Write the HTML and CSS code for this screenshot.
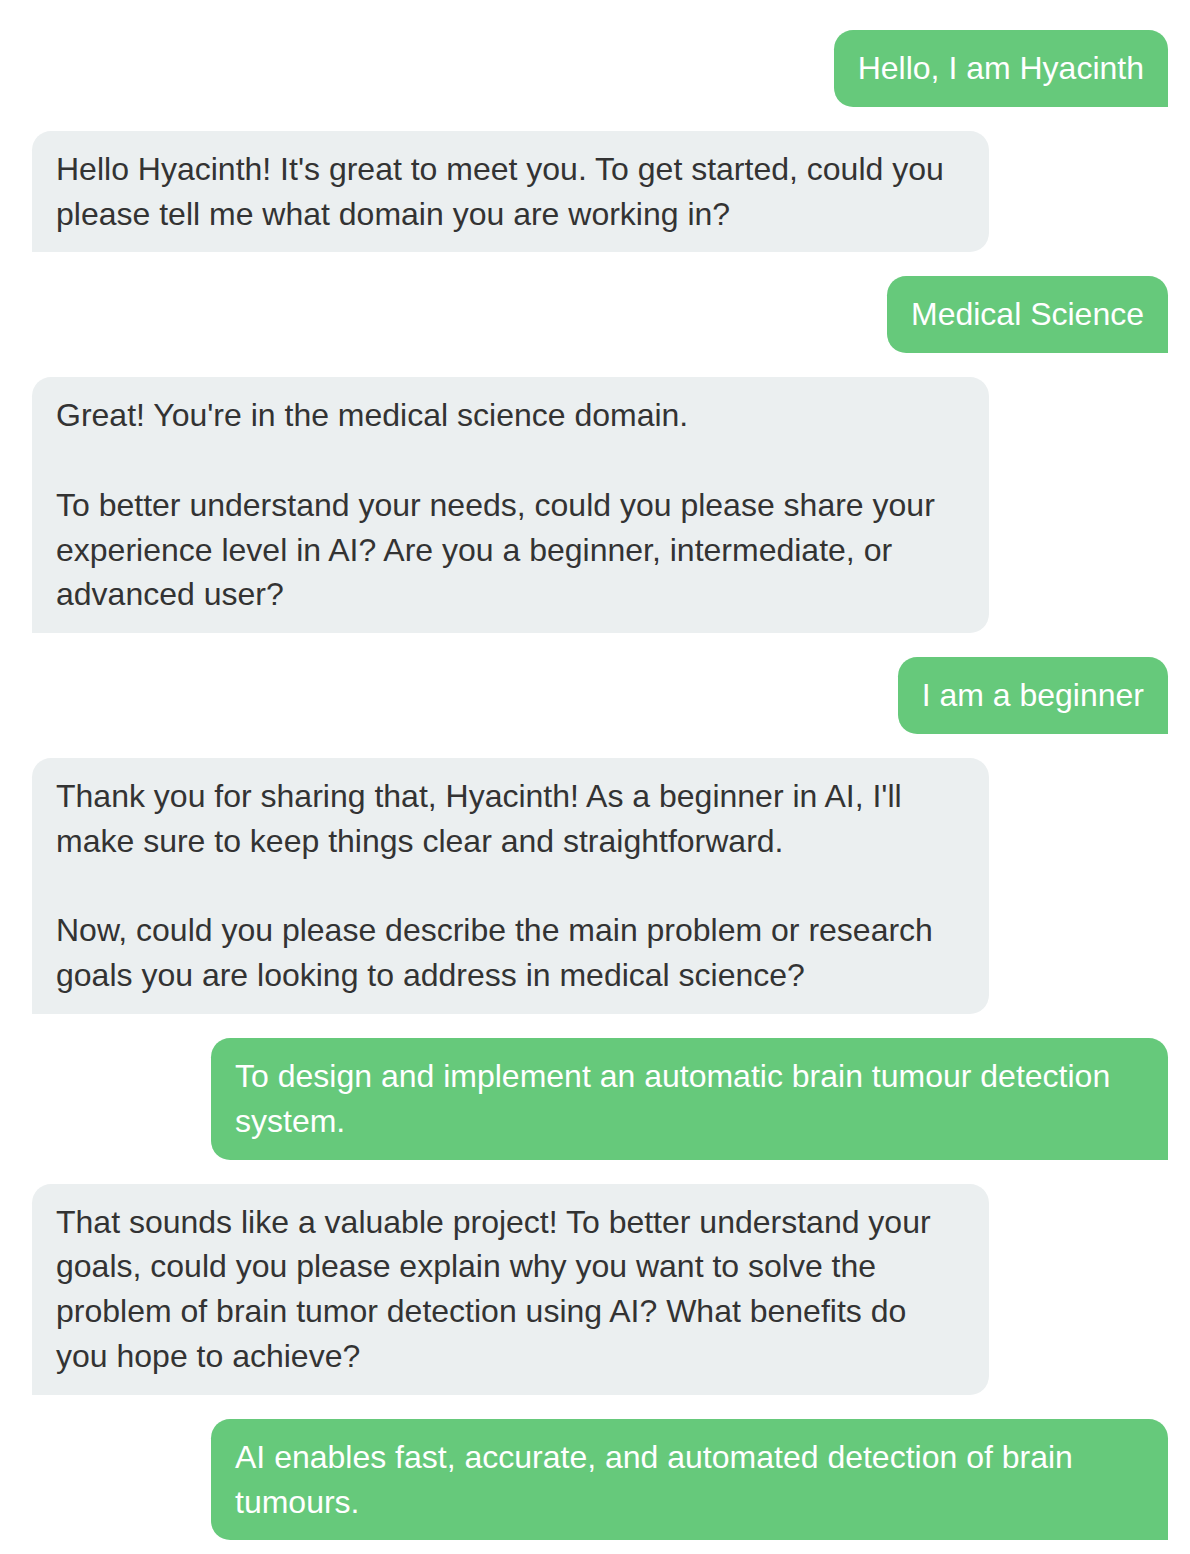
FILE: index.html
```html
<!DOCTYPE html>
<html lang="en">
<head>
<meta charset="utf-8">
<title>Chat</title>
<link rel="stylesheet" href="styles.css">
</head>
<body>
<div class="chat">
  <div class="msg user">Hello, I am Hyacinth</div>
  <div class="msg bot">Hello Hyacinth! It's great to meet you. To get started, could you please tell me what domain you are working in?</div>
  <div class="msg user">Medical Science</div>
  <div class="msg bot">Great! You're in the medical science domain.<br><br>To better understand your needs, could you please share your experience level in AI? Are you a beginner, intermediate, or advanced user?</div>
  <div class="msg user">I am a beginner</div>
  <div class="msg bot">Thank you for sharing that, Hyacinth! As a beginner in AI, I'll make sure to keep things clear and straightforward.<br><br>Now, could you please describe the main problem or research goals you are looking to address in medical science?</div>
  <div class="msg user">To design and implement an automatic brain tumour detection system.</div>
  <div class="msg bot">That sounds like a valuable project! To better understand your goals, could you please explain why you want to solve the problem of brain tumor detection using AI? What benefits do you hope to achieve?</div>
  <div class="msg user">AI enables fast, accurate, and automated detection of brain tumours.</div>
</div>
</body>
</html>
```
FILE: styles.css
```css
html, body {
  margin: 0;
  padding: 0;
  background: #ffffff;
}

body {
  font-family: "Liberation Sans", Arial, Helvetica, sans-serif;
  font-size: 32px;
  line-height: 1.4;
}

.chat {
  display: flex;
  flex-direction: column;
  gap: 24px;
  padding: 30px 22px 14px 32px;
}

.msg {
  max-width: 957px;
  box-sizing: border-box;
  padding: 16px 24px;
  border-radius: 19.2px;
}

.user {
  align-self: flex-end;
  background: #66c97b;
  color: #ffffff;
  border-bottom-right-radius: 0;
}

.bot {
  align-self: flex-start;
  width: 957px;
  background: #ebeff0;
  color: #333333;
  border-bottom-left-radius: 0;
}
```
